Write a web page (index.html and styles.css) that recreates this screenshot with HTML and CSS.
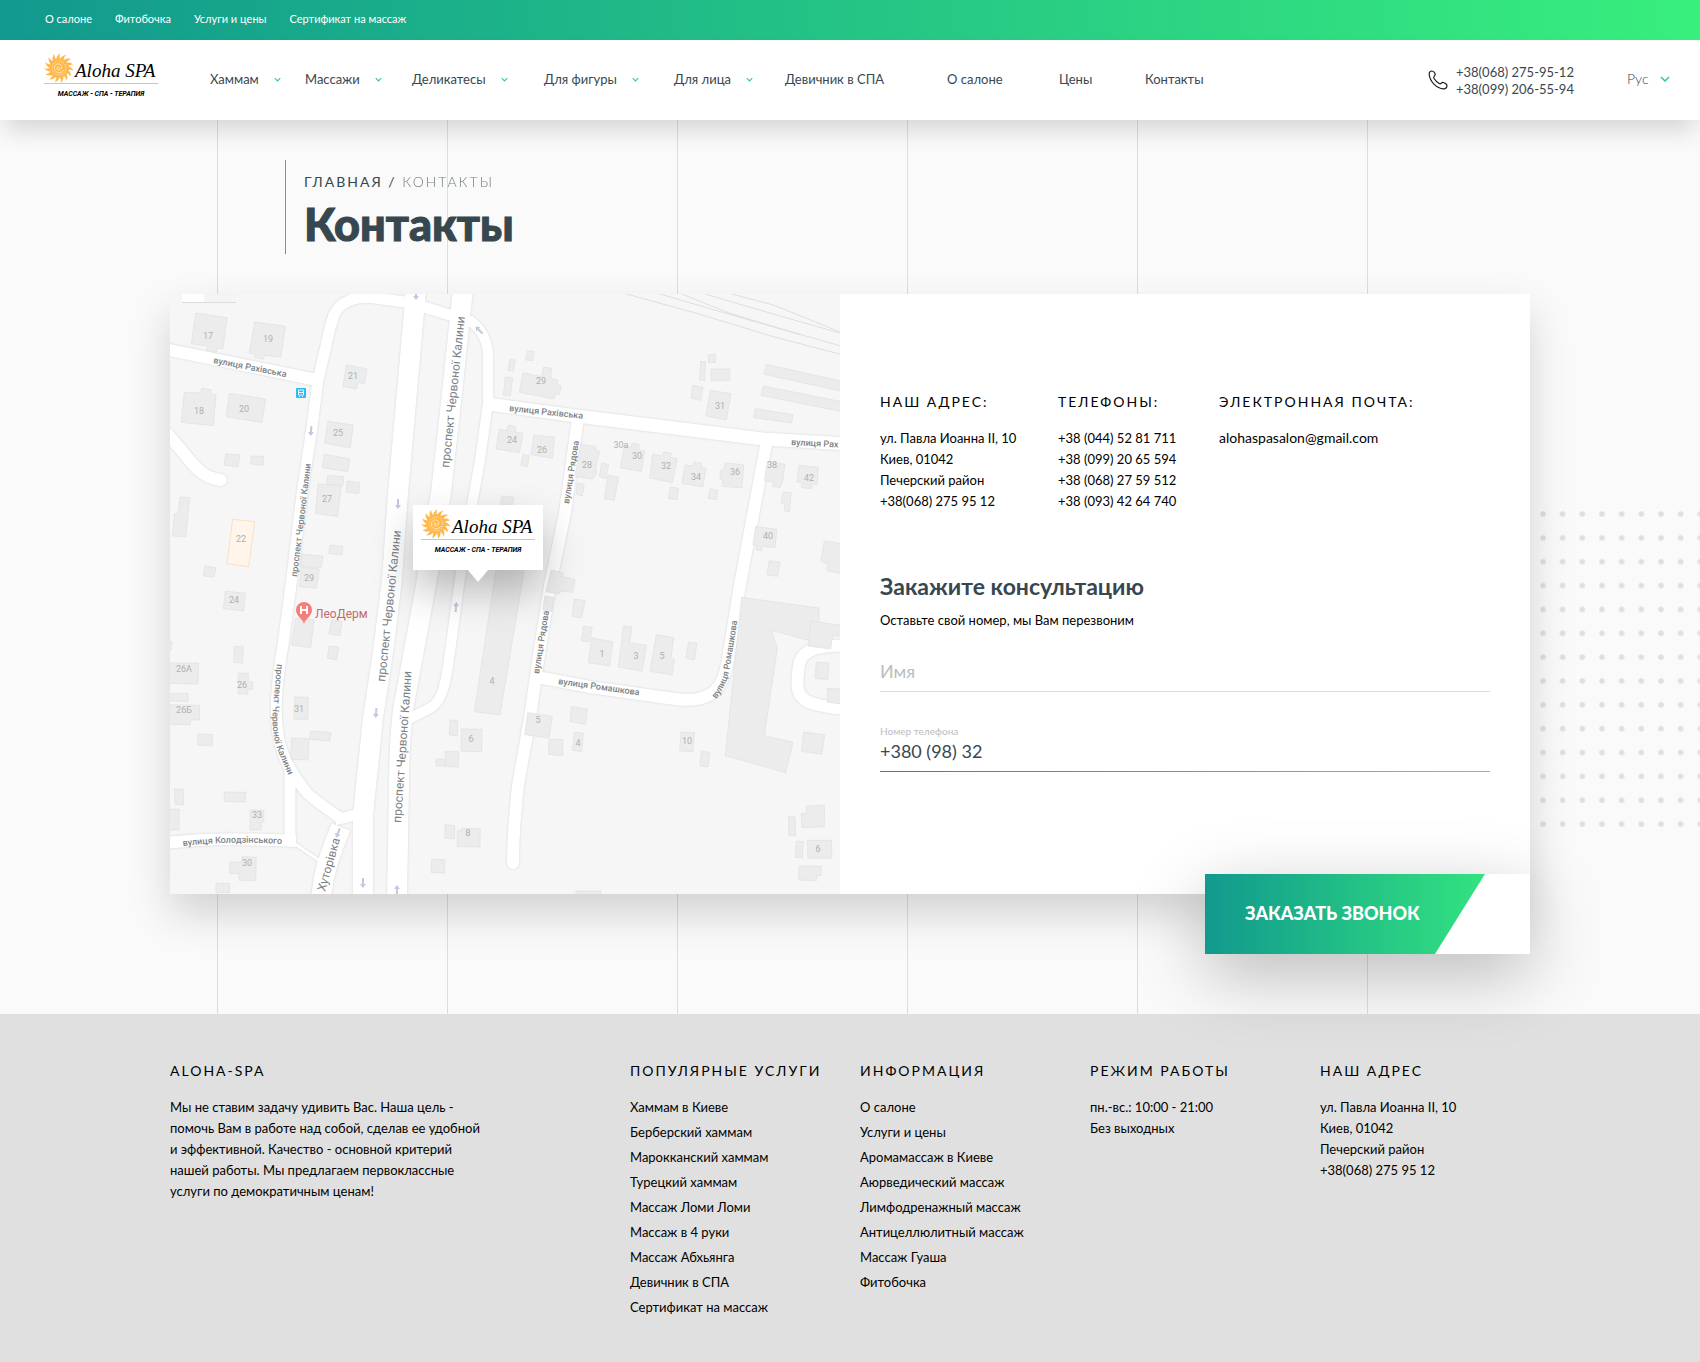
FILE: index.html
```html
<!DOCTYPE html>
<html lang="ru">
<head>
<meta charset="utf-8">
<meta name="viewport" content="width=device-width, initial-scale=1">
<title>Контакты</title>
<link rel="stylesheet" href="styles.css">
</head>
<body>
<svg class="defs" aria-hidden="true">
  <defs>
    <path id="ray" d="M11.2 7.4C11.2 4.600 12.400 1.800 15.200 0C14.200 2.600 14.400 4.800 15.600 7Z"/>
    <symbol id="sun" viewBox="0 0 28 28">
      <g fill="#ffb84d">
        <circle cx="14" cy="14" r="7.800"/>
        <use href="#ray"/><use href="#ray" transform="rotate(24 14 14)"/><use href="#ray" transform="rotate(48 14 14)"/><use href="#ray" transform="rotate(72 14 14)"/><use href="#ray" transform="rotate(96 14 14)"/><use href="#ray" transform="rotate(120 14 14)"/><use href="#ray" transform="rotate(144 14 14)"/><use href="#ray" transform="rotate(168 14 14)"/><use href="#ray" transform="rotate(192 14 14)"/><use href="#ray" transform="rotate(216 14 14)"/><use href="#ray" transform="rotate(240 14 14)"/><use href="#ray" transform="rotate(264 14 14)"/><use href="#ray" transform="rotate(288 14 14)"/><use href="#ray" transform="rotate(312 14 14)"/><use href="#ray" transform="rotate(336 14 14)"/>
      </g>
      <path d="M14.4 14.2a1.2 1.2 0 1 0-1.6 1.2c2 .8 4-.6 3.8-2.6-.3-2.400-3-3.300-5-2.200-2.400 1.400-2.600 4.800-.6 6.600 2.400 2 6 1.400 7.400-1.200" fill="none" stroke="#ffe9bd" stroke-width=".9"/>
      <circle cx="14" cy="14" r="6.400" fill="none" stroke="#ffe9bd" stroke-width=".8" stroke-dasharray="1.200 .8"/>
    </symbol>
    <symbol id="chevron" viewBox="0 0 10 6"><path d="M1 1l4 4 4-4" fill="none" stroke="#2bcf84" stroke-width="1.500"/></symbol>
  </defs>
</svg>

<div class="topbar">
  <nav class="topbar-nav">
    <a href="#">О салоне</a>
    <a href="#">Фитобочка</a>
    <a href="#">Услуги и цены</a>
    <a href="#">Сертификат на массаж</a>
  </nav>
</div>

<header class="header">
  <a class="logo header-logo" href="#">
    <span class="logo-top"><svg class="logo-sun"><use href="#sun"/></svg><span class="logo-name">Aloha SPA</span></span>
    <span class="logo-sub">МАССАЖ - СПА - ТЕРАПИЯ</span>
  </a>
  <nav class="menu">
    <a href="#">Хаммам <svg class="chev"><use href="#chevron"/></svg></a>
    <a href="#">Массажи <svg class="chev"><use href="#chevron"/></svg></a>
    <a href="#">Деликатесы <svg class="chev"><use href="#chevron"/></svg></a>
    <a href="#">Для фигуры <svg class="chev"><use href="#chevron"/></svg></a>
    <a href="#">Для лица <svg class="chev"><use href="#chevron"/></svg></a>
    <a href="#">Девичник в СПА</a>
    <a href="#">О салоне</a>
    <a href="#">Цены</a>
    <a href="#">Контакты</a>
  </nav>
  <div class="phones">
    <svg class="phone-icon" viewBox="0 0 20 20"><path d="M1.200 4.300C1 2.500 2.300 1 3.900 1C5.300 1 6.400 2.200 7 3.600C7.500 4.700 7 5.500 6.300 6.200C5.600 6.900 5.400 7.500 5.900 8.300C7.200 10.500 9 12.300 11.300 13.600C12.100 14.100 12.700 13.900 13.300 13.200C14 12.500 14.900 12.200 16 12.700C17.700 13.400 19 14.400 19 15.700C19 17.500 17.400 19 15.600 18.900C8.500 18.500 1.800 11.500 1.200 4.300Z" fill="none" stroke="#1c1c1c" stroke-width="1.200"/></svg>
    <div class="phone-list">
      <a href="tel:+380682759512">+38(068) 275-95-12</a>
      <a href="tel:+380992065594">+38(099) 206-55-94</a>
    </div>
  </div>
  <div class="lang">
    <select aria-label="Язык"><option>Рус</option></select>
    <svg class="lang-chev"><use href="#chevron"/></svg>
  </div>
</header>

<main class="main">
  <svg class="dots" aria-hidden="true">
    <defs><pattern id="dot" width="19.660" height="23.850" patternUnits="userSpaceOnUse"><circle cx="3" cy="3" r="2.800" fill="#dfdfdf"/></pattern></defs>
    <rect width="100%" height="100%" fill="url(#dot)"/>
  </svg>
  <div class="container">
    <div class="title">
      <nav class="crumbs"><a href="#">Главная</a> / <span class="crumb-current">Контакты</span></nav>
      <h1>Контакты</h1>
    </div>

    <section class="card">
      <div class="map">
        <svg class="map-art" viewBox="0 0 670 600" preserveAspectRatio="xMidYMid slice">
          <defs>
            <g id="roads" fill="none" stroke-linejoin="round">
              <path class="w12" d="M-5 55L147 86"/>
              <path class="w11" d="M302 28L280 21L257 14L235 8L205 4C185 1 170 8 164 21C160 32 158 42 156 52L148 86L142 133L132 200L121 291L113 351C108 380 105 410 107 430C108 455 118 475 137 499C148 509 160 517 172 525"/>
              <path class="w20" d="M246 -5L238 86L228 199L222 286L213 358L203 424L193 521V605"/>
              <path class="w20" d="M293 -5L283 90L271 199L256 291L233 416C229 450 229 470 229 491L227 605"/>
              <path class="w10" d="M280 21L302 28C312 36 317 48 318 59V109L310 166L302 211L289 291L280 358C276 390 272 406 262 413L235 427"/>
              <path class="w13" d="M318 110L407 122L593 145L680 150"/>
              <path class="w12 round" d="M408 124L395 219L380 291L367 374L360 424L348 491C345 520 343 545 343 569"/>
              <path class="w12" d="M367 383L420 393L505 405C535 409 552 400 557 370L570 291L597 146"/>
              <path class="w12" d="M680 351L660 352C636 354 628 362 628 380C625 405 632 412 680 415"/>
              <path class="w12 round" d="M-4 138L17 163C30 180 38 184 51 186"/>
              <path class="w12" d="M-5 549C30 545 60 544 126 547"/>
              <path class="w11" d="M120 476V548"/>
              <path class="w20" d="M151 605C153 580 158 565 171 533"/>
              <path class="w11" d="M165 526L193 519"/>
              <path class="w3" d="M125 550L150 567"/>
            </g>
            <path id="arrow" d="M0 5L-3 1H-1V-5H1V1H3Z"/>
            <path id="p-romash" d="M546 405Q559 389 561 366L570 310"/>
            <path id="p-kalyny" d="M107 370L103 415Q101 440 108 457L126 500"/>
            <path id="p-kolo" d="M13 552Q65 546 125 551"/>
          </defs>
          <rect width="670" height="600" fill="#f6f6f6"/>
          <g class="rail" transform="translate(320 -14) scale(.3333)">
            <path d="M410 42L620 100L850 170L1060 225M510 42L760 115L1060 200M575 42L720 100L935 165M645 42L860 105L1060 162M725 42L850 75L950 115L1060 160"/>
          </g>
          <use href="#roads" class="casing"/>
          <use href="#roads" class="paving"/>
          <g class="buildings" transform="translate(-10 -14) scale(.3333)">
            <path d="M107 99L201 113 189 207 170 205 169 217 140 212 142 198 94 191Z"/>
            <path d="M284 126L377 139 362 231 313 226 311 238 283 232 284 222 268 219Z"/>
            <path d="M559 255L621 267 613 311 593 308 589 327 549 320Z"/>
            <path d="M73 337L123 339 125 325 153 329 151 341 168 345 160 437 64 427Z"/>
            <path d="M208 340L317 357 306 428 198 410Z"/>
            <path d="M504 424L580 435 571 503 494 490Z"/>
            <path d="M493 523L570 537 563 575 487 563Z"/>
            <path d="M503 586L552 590 549 616 499 612Z"/>
            <path d="M474 612L544 617 533 710 466 700Z"/>
            <path d="M562 603L600 609 596 641 558 636Z"/>
            <path d="M197 521L239 525 235 560 193 556Z"/>
            <path d="M274 528L312 529 309 556 271 552Z"/>
            <path d="M60 651L89 653 77 770 37 768 43 703 54 700Z"/>
            <path class="accent" d="M218 718L284 725 266 860 201 851Z"/>
            <path d="M134 858L167 863 162 892 130 888Z"/>
            <path d="M510 795L549 799 545 824 507 821Z"/>
            <path d="M425 822L489 829 483 863 421 860Z"/>
            <path d="M425 862L478 867 470 925 418 920Z"/>
          </g>
          <g class="buildings" transform="translate(320 -14) scale(.3333)">
            <path d="M112 213L132 215 128 242 107 240Z"/>
            <path d="M60 238L76 240 70 273 54 271Z"/>
            <path d="M46 291L68 294 61 348 40 344Z"/>
            <path d="M99 278L155 290 160 262 185 265 182 295 203 300 202 313 213 318 209 343 196 342 192 357 88 337Z"/>
            <path d="M655 225L676 222 677 247 656 249Z"/>
            <path d="M632 244L647 245 644 302 629 300Z"/>
            <path d="M663 267L719 267 719 301 663 301Z"/>
            <path d="M608 316L639 322 632 361 603 355Z"/>
            <path d="M661 331L723 341 709 419 647 408Z"/>
            <path d="M829 253L1060 305 1060 335 822 283Z"/>
            <path d="M820 318L1060 366 1060 396 813 346Z"/>
            <path d="M795 386L909 404 905 429 791 413Z"/>
            <path d="M28 448L50 452 55 435 77 440 75 456 99 460 88 518 18 507Z"/>
            <path d="M132 465L194 472 187 535 123 524Z"/>
            <path d="M99 524L118 527 113 560 93 556Z"/>
            <path d="M36 648L72 652 66 680 30 676Z"/>
            <path d="M272 492L318 500 317 511 329 515 322 540 317 567 321 573 316 588 307 597 255 590Z"/>
            <path d="M335 549L356 554 347 596 328 590Z"/>
            <path d="M354 586L386 592 373 661 343 656Z"/>
            <path d="M262 609L283 613 277 647 258 643Z"/>
            <path d="M403 497L423 502 425 490 447 493 446 510 464 513 454 574 391 564Z"/>
            <path d="M488 523L518 527 522 516 544 520 541 532 562 536 547 608 479 594Z"/>
            <path d="M585 555L608 558 611 546 636 550 634 562 648 565 639 621 576 610Z"/>
            <path d="M704 549L761 554 756 624 699 619 697 598 689 596 692 571 702 570Z"/>
            <path d="M541 621L566 625 561 659 535 655Z"/>
            <path d="M660 627L683 631 680 659 654 655Z"/>
            <path d="M832 545L885 553 878 605 870 623 848 620 851 607 823 602Z"/>
            <path d="M927 556L985 562 981 614 967 612 965 626 934 623 936 609 921 606Z"/>
            <path d="M880 636L904 638 898 695 883 692 884 674 873 668Z"/>
            <path d="M797 739L861 748 855 803 817 799 815 812 798 809 800 797 789 795Z"/>
            <path d="M838 842L870 846 863 889 831 885Z"/>
            <path d="M1003 783L1060 792 1060 882 1010 872 1013 850 993 845Z"/>
            <path d="M184 870L220 878 218 890 255 898 248 937 210 933 208 942 168 935Z"/>
          </g>
          <g class="buildings" transform="translate(-10 291) scale(.3333)">
            <path d="M196 18L257 25 251 78 190 71Z"/>
            <path d="M407 100L463 105 452 188 395 180Z"/>
            <path d="M514 105L546 110 540 152 507 147Z"/>
            <path d="M507 183L536 186 530 224 502 220Z"/>
            <path d="M20 168L36 170 34 195 20 195Z"/>
            <path d="M223 184L250 184 248 234 221 232Z"/>
            <path d="M20 234L116 234 114 297 20 295Z"/>
            <path d="M235 265L265 265 265 290 278 290 278 313 264 313 264 327 235 327Z"/>
            <path d="M20 325L84 325 84 350 20 348Z"/>
            <path d="M20 359L119 361 118 405 91 405 91 419 20 418Z"/>
            <path d="M114 447L158 449 157 483 112 480Z"/>
            <path d="M404 336L445 337 443 404 402 402Z"/>
            <path d="M452 438L513 443 509 468 449 463Z"/>
            <path d="M394 459L447 461 445 525 393 523Z"/>
            <path d="M43 612L71 613 70 660 45 658Z"/>
            <path d="M193 621L257 622 256 651 193 650Z"/>
            <path d="M270 675L312 676 311 710 304 711 303 735 270 735Z"/>
            <path d="M20 672L58 673 57 735 20 735Z"/>
            <path d="M246 815L289 817 287 887 237 886 238 866 208 865 209 832 245 831Z"/>
            <path d="M168 895L209 895 208 923 168 923Z"/>
            <path d="M870 405L893 406 893 452 868 450Z"/>
            <path d="M904 432L966 433 965 500 903 499Z"/>
            <path d="M856 499L897 500 895 546 856 545Z"/>
            <path d="M828 522L856 523 856 543 828 543Z"/>
            <path d="M855 719L884 722 883 762 855 760Z"/>
            <path d="M905 730L961 731 960 786 891 785 892 737 905 737Z"/>
            <path d="M815 823L855 824 854 864 814 863Z"/>
          </g>
          <g class="buildings" transform="translate(320 291) scale(.3333)">
            <path d="M20 -60L105 -60 30 390 -47 380Z"/>
            <path d="M165 33L192 38 185 80 158 75Z"/>
            <path d="M253 42L285 47 275 99 247 94Z"/>
            <path d="M280 123L307 127 299 171 274 167Z"/>
            <path d="M306 159L369 170 359 243 295 233Z"/>
            <path d="M400 123L426 126 419 173 469 181 457 259 385 246 395 170Z"/>
            <path d="M499 149L551 158 543 218 554 223 547 270 480 259Z"/>
            <path d="M596 171L621 175 613 224 588 220Z"/>
            <path d="M755 37L987 69 988 170 952 165 845 136 862 190 823 452 909 472 887 563 706 512Z"/>
            <path d="M963 108L1060 122 1060 155 1028 152 1022 192 955 183Z"/>
            <path d="M979 231L1017 235 1013 284 975 280Z"/>
            <path d="M1012 310L1060 313 1060 357 1012 352Z"/>
            <path d="M941 441L1004 450 996 508 934 499Z"/>
            <path d="M113 383L187 394 177 459 104 449Z"/>
            <path d="M178 462L219 464 218 512 175 508Z"/>
            <path d="M244 365L292 373 287 418 240 410Z"/>
            <path d="M253 441L280 445 275 500 247 496Z"/>
            <path d="M573 441L614 443 609 500 569 498Z"/>
            <path d="M634 498L659 502 654 546 630 543Z"/>
            <path d="M950 663L1004 661 1003 725 936 728 934 685 950 685Z"/>
            <path d="M895 694L915 694 917 752 897 752Z"/>
            <path d="M919 768L941 770 937 819 916 817Z"/>
            <path d="M952 766L1024 766 1026 820 954 820Z"/>
            <path d="M928 843L995 844 993 872 980 872 980 887 925 885Z"/>
            <path d="M258 918L332 918 332 940 258 940Z"/>
          </g>
          <g class="arrows">
            <use href="#arrow" transform="translate(141 137) rotate(5)"/>
            <use href="#arrow" transform="translate(228 210)"/>
            <use href="#arrow" transform="translate(246 1)"/>
            <use href="#arrow" transform="translate(309 36) rotate(135)"/>
            <use href="#arrow" transform="translate(206 419) rotate(5)"/>
            <use href="#arrow" transform="translate(193 589)"/>
            <use href="#arrow" transform="translate(168 539) rotate(20)"/>
            <use href="#arrow" transform="translate(286 313) rotate(185)"/>
            <use href="#arrow" transform="translate(227 596) rotate(180)"/>
          </g>
          <g class="house">
            <text x="38" y="45">17</text><text x="98" y="48">19</text><text x="183" y="85">21</text><text x="29" y="120">18</text><text x="74" y="118">20</text><text x="168" y="142">25</text><text x="157" y="208">27</text><text x="71" y="248">22</text><text x="139" y="287">29</text>
            <text x="371" y="90">29</text><text x="550" y="115">31</text><text x="342" y="149">24</text><text x="372" y="159">26</text><text x="417" y="174">28</text><text x="451" y="154">30а</text><text x="467" y="165">30</text><text x="496" y="175">32</text><text x="526" y="186">34</text><text x="565" y="181">36</text><text x="602" y="174">38</text><text x="639" y="187">42</text><text x="598" y="245">40</text>
            <text x="64" y="309">24</text><text x="14" y="378">26А</text><text x="72" y="394">26</text><text x="14" y="419">26Б</text><text x="129" y="418">31</text><text x="87" y="524">33</text><text x="77" y="572">30</text><text x="322" y="390">4</text><text x="301" y="448">6</text><text x="298" y="542">8</text>
            <text x="432" y="363">1</text><text x="466" y="365">3</text><text x="492" y="365">5</text><text x="368" y="429">5</text><text x="408" y="452">4</text><text x="517" y="450">10</text><text x="648" y="558">6</text>
          </g>
          <g class="street">
            <text transform="translate(43 69) rotate(11)">вулиця Рахівська</text>
            <text transform="translate(339 117) rotate(6)">вулиця Рахівська</text>
            <text transform="translate(621 151) rotate(3)">вулиця Рах</text>
            <text transform="translate(399 210) rotate(-81)">вулиця Рядова</text>
            <text transform="translate(369 380) rotate(-81)">вулиця Рядова</text>
            <text transform="translate(388 390) rotate(8)">вулиця Ромашкова</text>
            <text><textPath href="#p-romash">вулиця Ромашкова</textPath></text>
            <text transform="translate(127 283) rotate(-83)">проспект Червоної Калини</text>
            <text><textPath href="#p-kalyny">проспект Червоної Калини</textPath></text>
            <text><textPath href="#p-kolo">вулиця Колодзінського</textPath></text>
          </g>
          <g class="avenue">
            <text transform="translate(279 174) rotate(-84)">проспект Червоної Калини</text>
            <text transform="translate(215 388) rotate(-84)">проспект Червоної Калини</text>
            <text transform="translate(231 529) rotate(-86)">проспект Червоної Калини</text>
            <text transform="translate(155 598) rotate(-74)">Хуторівка</text>
          </g>
          <rect x="126" y="94" width="10" height="10" rx="1" fill="#2bbcf7"/>
          <path d="M128.500 96h5v5h-5zM128.500 98.500h5M129 102.500h1M132 102.500h1" fill="none" stroke="#fff" stroke-width=".9"/>
          <path d="M134 330C133 325 126 322 126 316A8 8 0 0 1 142 316C142 322 135 325 134 330Z" fill="#f97c7c"/>
          <path d="M131 312V320M137 312V320M131 316H137" stroke="#fff" stroke-width="2"/>
          <text class="place" x="145" y="324">ЛеоДерм</text>
          <rect x="12" y="2" width="54" height="7" fill="#dcdcdc"/>
          <rect x="12" y="0" width="54" height="8" fill="#f4f4f4"/>
          <rect x="12" y="0" width="22" height="8" fill="#fff"/>
        </svg>
        <div class="marker">
          <div class="logo">
            <span class="logo-top"><svg class="logo-sun"><use href="#sun"/></svg><span class="logo-name">Aloha SPA</span></span>
            <span class="logo-sub">МАССАЖ - СПА - ТЕРАПИЯ</span>
          </div>
        </div>
      </div>

      <form class="panel" id="callback">
        <div class="contacts">
          <div>
            <h3 class="caps">Наш адрес:</h3>
            <p>ул. Павла Иоанна II, 10<br>Киев, 01042<br>Печерский район<br>+38(068) 275 95 12</p>
          </div>
          <div>
            <h3 class="caps">Телефоны:</h3>
            <p>+38 (044) 52 81 711<br>+38 (099) 20 65 594<br>+38 (068) 27 59 512<br>+38 (093) 42 64 740</p>
          </div>
          <div>
            <h3 class="caps">Электронная почта:</h3>
            <p class="email"><a href="mailto:alohaspasalon@gmail.com">alohaspasalon@gmail.com</a></p>
          </div>
        </div>
        <h2>Закажите консультацию</h2>
        <p>Оставьте свой номер, мы Вам перезвоним</p>
        <div class="field field-name">
          <input type="text" placeholder="Имя" aria-label="Имя">
        </div>
        <div class="field field-active">
          <label for="phone">Номер телефона</label>
          <input id="phone" type="tel" value="+380 (98) 32">
        </div>
      </form>
      <button class="order" type="submit" form="callback"><span>Заказать звонок</span></button>
    </section>
  </div>
</main>

<footer class="footer">
  <div class="container footer-grid">
    <section>
      <h3 class="caps">Aloha-SPA</h3>
      <p>Мы не ставим задачу удивить Вас. Наша цель -<br>помочь Вам в работе над собой, сделав ее удобной<br>и эффективной. Качество - основной критерий<br>нашей работы. Мы предлагаем первоклассные<br>услуги по демократичным ценам!</p>
    </section>
    <section>
      <h3 class="caps">Популярные услуги</h3>
      <ul>
        <li><a href="#">Хаммам в Киеве</a></li>
        <li><a href="#">Берберский хаммам</a></li>
        <li><a href="#">Марокканский хаммам</a></li>
        <li><a href="#">Турецкий хаммам</a></li>
        <li><a href="#">Массаж Ломи Ломи</a></li>
        <li><a href="#">Массаж в 4 руки</a></li>
        <li><a href="#">Массаж Абхьянга</a></li>
        <li><a href="#">Девичник в СПА</a></li>
        <li><a href="#">Сертификат на массаж</a></li>
      </ul>
    </section>
    <section>
      <h3 class="caps">Информация</h3>
      <ul>
        <li><a href="#">О салоне</a></li>
        <li><a href="#">Услуги и цены</a></li>
        <li><a href="#">Аромамассаж в Киеве</a></li>
        <li><a href="#">Аюрведический массаж</a></li>
        <li><a href="#">Лимфодренажный массаж</a></li>
        <li><a href="#">Антицеллюлитный массаж</a></li>
        <li><a href="#">Массаж Гуаша</a></li>
        <li><a href="#">Фитобочка</a></li>
      </ul>
    </section>
    <section>
      <h3 class="caps">Режим работы</h3>
      <p>пн.-вс.: 10:00 - 21:00<br>Без выходных</p>
    </section>
    <section>
      <h3 class="caps">Наш адрес</h3>
      <p>ул. Павла Иоанна II, 10<br>Киев, 01042<br>Печерский район<br>+38(068) 275 95 12</p>
    </section>
  </div>
</footer>
</body>
</html>
```
FILE: styles.css
```css
* { box-sizing: border-box; }

body {
  margin: 0;
  background: #fafafa;
  color: #000;
  font: 13px/21px Lato, "Open Sans", sans-serif;
}

a { color: inherit; text-decoration: none; }
h1, h2, h3, p, ul { margin: 0; padding: 0; }
ul { list-style: none; }
p, h1, h2, h3, a { white-space: nowrap; }

.defs { position: absolute; width: 0; height: 0; }

.container { max-width: 1360px; margin: 0 auto; }

.caps {
  margin-bottom: 16px;
  font-size: 14px;
  font-weight: 400;
  line-height: 20px;
  letter-spacing: 2px;
  text-transform: uppercase;
}

/* Top bar */
.topbar {
  height: 40px;
  background: linear-gradient(90deg, #11998e, #38ef7d);
}
.topbar-nav {
  display: flex;
  align-items: center;
  gap: 23px;
  height: 100%;
  padding: 0 45px 3px;
  color: #fff;
  font-size: 11px;
}

/* Header */
.header {
  position: relative;
  z-index: 2;
  display: flex;
  align-items: center;
  height: 80px;
  padding: 0 30px 0 44px;
  background: #fff;
  color: #37474f;
  box-shadow: 0 15px 25px -5px rgba(0, 0, 0, .15);
}

.logo { display: block; width: 114px; color: #000; }
.header-logo { padding-bottom: 6px; }
.logo-top {
  display: flex;
  align-items: flex-end;
  gap: 1px;
  height: 34px;
  border-bottom: 1px solid #ffbf5e;
}
.logo-sun { flex: none; width: 30px; height: 30px; }
.logo-name {
  font: italic 19px/24px "Liberation Serif", serif;
  white-space: nowrap;
}
.logo-sub {
  display: block;
  font: italic 700 7px/20px Roboto, sans-serif;
  text-align: center;
  white-space: nowrap;
}

.menu {
  display: grid;
  grid-template-columns: 95px 107px 132px 130px 111px 162px 112px 86px auto;
  margin-left: 52px;
  padding-bottom: 2px;
}
.menu a { display: flex; align-items: center; gap: 15px; }
.chev { width: 7px; height: 5px; }

.phones { display: flex; align-items: center; gap: 8px; margin-left: auto; }
.phone-icon { width: 20px; height: 20px; }
.phone-list { display: grid; width: 171px; padding-top: 2px; line-height: 17px; }

.lang { display: flex; align-items: center; gap: 10px; padding-bottom: 2px; }
.lang select {
  width: 23px;
  padding: 0;
  border: 0;
  background: none;
  color: #37474f;
  font: 300 14px/20px Lato, "Open Sans", sans-serif;
  appearance: none;
}
.lang-chev { width: 10px; height: 6px; }

/* Page */
.main {
  position: relative;
  padding: 40px 0 120px;
  background: repeating-linear-gradient(90deg, #ddd 0 1px, transparent 1px 230px) 217px 0 / 1151px 100% no-repeat;
}
.main .container { position: relative; }

.dots {
  position: absolute;
  top: 391px;
  right: 0;
  width: 160px;
  height: 320px;
}

.title {
  height: 94px;
  margin: 0 0 40px 115px;
  padding: 12px 0 0 18px;
  border-left: 1px solid #2bbd88;
  color: #37474f;
}
.crumbs { font-size: 14px; line-height: 20px; letter-spacing: 2px; text-transform: uppercase; }
.crumb-current { font-weight: 300; opacity: .7; }
h1 {
  font-size: 45px;
  font-weight: 900;
  line-height: 64px;
  -webkit-text-stroke: 1px #37474f;
}

.card {
  position: relative;
  display: grid;
  grid-template-columns: 670fr 690fr;
  min-height: 600px;
  background: #fff;
  box-shadow: 0 20px 40px rgba(0, 0, 0, .16);
}

/* Map */
.map { position: relative; overflow: hidden; }
.map-art { display: block; width: 100%; height: 100%; }
.casing { stroke: #e2e2e2; filter: drop-shadow(0 0 1px #d4d4d4); }
.paving { stroke: #fff; }
.w3 { stroke-width: 3px; }
.w10 { stroke-width: 10px; }
.w11 { stroke-width: 11px; }
.w12 { stroke-width: 12px; }
.w13 { stroke-width: 13px; }
.w20 { stroke-width: 20px; }
.round { stroke-linecap: round; }
.buildings { fill: #ececec; stroke: #e0e0e0; stroke-width: 2px; }
.accent { fill: #fff5ea; stroke: #fbd3a8; }
.rail { fill: none; stroke: #dcdfe0; stroke-width: 3px; }
.arrows { fill: #c3c8de; }
.house { fill: #b0b0b0; font: 9px Roboto, sans-serif; text-anchor: middle; }
.street { fill: #7c8286; font: 500 9px Roboto, sans-serif; }
.avenue { fill: #7c8286; font: 12px Roboto, sans-serif; }
.place { fill: #c4696b; font: 12px Roboto, sans-serif; }

.marker {
  position: absolute;
  top: 211px;
  left: 243px;
  width: 130px;
  height: 65px;
  padding: 1px 8px;
  background: #fff;
  box-shadow: 0 20px 40px rgba(0, 0, 0, .25);
}
.marker::after {
  content: "";
  position: absolute;
  top: 100%;
  left: 55px;
  border: 10px solid transparent;
  border-top: 12px solid #fff;
  border-bottom: 0;
}

/* Contacts and form */
.panel { padding: 98px 40px 0; }
.contacts {
  display: grid;
  grid-template-columns: 178px 161px auto;
  margin-bottom: 59px;
}
.email { font-size: 14px; line-height: 20px; }
h2 {
  margin-bottom: 9px;
  color: #37474f;
  font-size: 23px;
  font-weight: 700;
  line-height: 30px;
}
.field {
  display: flex;
  flex-direction: column;
  justify-content: flex-end;
  height: 80px;
  padding-bottom: 9px;
  background: linear-gradient(#ddd, #ddd) 0 100% / 100% 1px no-repeat;
}
.field-name { height: 61px; }
.field-active { background-image: linear-gradient(90deg, #11998e, #38ef7d); }
.field label { color: #bdbdbd; font-size: 10px; line-height: 16px; }
.field input {
  width: 100%;
  height: 24px;
  padding: 0;
  border: 0;
  outline: 0;
  background: none;
  color: #37474f;
  font: 18px/24px Lato, "Open Sans", sans-serif;
}
.field input::placeholder { color: #bdbdbd; opacity: 1; }

.order {
  position: absolute;
  right: 0;
  bottom: -60px;
  width: 325px;
  height: 80px;
  padding: 0;
  border: 0;
  background: #fff;
  box-shadow: 0 20px 70px rgba(0, 0, 0, .26);
  color: #fff;
  font: 900 18px/78px Lato, "Open Sans", sans-serif;
  text-align: left;
  text-transform: uppercase;
}
.order span {
  display: block;
  width: 280px;
  height: 80px;
  padding-left: 40px;
  background: linear-gradient(90deg, #11998e, #38ef7d 325px);
  clip-path: polygon(0 0, 100% 0, 230px 100%, 0 100%);
}

/* Footer */
.footer { padding: 47px 0 40px; background: #e0e0e0; }
.footer-grid { display: grid; grid-template-columns: 460fr 230fr 230fr 230fr 210fr; }
.footer li { margin-bottom: 4px; }
```
